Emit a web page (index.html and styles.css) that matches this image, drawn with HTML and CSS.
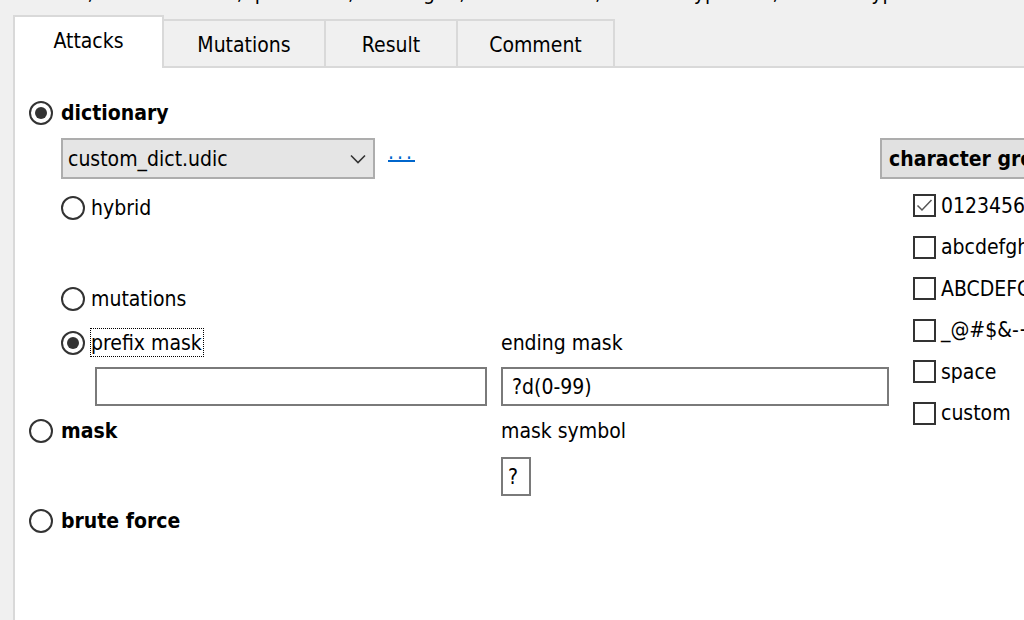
FILE: index.html
```html
<!DOCTYPE html>
<html>
<head>
<meta charset="utf-8">
<link rel="stylesheet" href="styles.css">
</head>
<body>
<div class="status"><span>total: 0,&nbsp;&nbsp;Not started: 0,&nbsp;&nbsp;paused: 0,&nbsp;&nbsp;waiting: 0,&nbsp;&nbsp;Not found: 0,&nbsp;&nbsp;Not decrypted: 0,&nbsp;&nbsp;Not encrypted: 0</span></div>
<div class="tabs">
  <div class="tab active">Attacks</div>
  <div class="tab t-mut">Mutations</div>
  <div class="tab t-res">Result</div>
  <div class="tab t-com">Comment</div>
</div>
<div class="panel">
  <div class="attacks">
    <div class="row r-dict"><span class="radio on"></span><span class="lbl bold">dictionary</span></div>
    <div class="row r-combo">
      <div class="combo"><span>custom_dict.udic</span>
        <svg class="chev" width="16" height="10" viewBox="0 0 16 10"><path d="M1 1.5 L8 8.5 L15 1.5" fill="none" stroke="#333" stroke-width="1.6"/></svg>
      </div>
      <a class="more" href="#">...</a>
    </div>
    <div class="row r-hybrid sub"><span class="radio"></span><span class="lbl">hybrid</span></div>
    <div class="row r-mut sub"><span class="radio"></span><span class="lbl">mutations</span></div>
    <div class="row2 r-prefix">
      <div class="cell sub"><span class="radio on"></span><span class="lbl focus">prefix mask</span></div>
      <div class="cell"><span class="lbl">ending mask</span></div>
    </div>
    <div class="row2 r-inputs">
      <div class="cell"><div class="input prefix"></div></div>
      <div class="cell"><div class="input ending">?d(0-99)</div></div>
    </div>
    <div class="row2 r-mask">
      <div class="cell"><span class="radio"></span><span class="lbl bold">mask</span></div>
      <div class="cell"><span class="lbl">mask symbol</span></div>
    </div>
    <div class="row2 r-sym">
      <div class="cell"></div>
      <div class="cell"><div class="input sym">?</div></div>
    </div>
    <div class="row r-brute"><span class="radio"></span><span class="lbl bold">brute force</span></div>
  </div>
  <div class="groups">
    <div class="group-head">character groups</div>
    <ul class="checks">
      <li><span class="cb"><svg width="19" height="19" viewBox="0 0 19 19"><path d="M2.5 9.5 L7 14 L16.5 4" fill="none" stroke="#555" stroke-width="1.5"/></svg></span><span class="lbl">0123456789</span></li>
      <li><span class="cb"></span><span class="lbl">abcdefghijklmnopqrstuvwxyz</span></li>
      <li><span class="cb"></span><span class="lbl">ABCDEFGHIJKLMNOPQRSTUVWXYZ</span></li>
      <li><span class="cb"></span><span class="lbl">_@#$&amp;-+=!?</span></li>
      <li><span class="cb"></span><span class="lbl">space</span></li>
      <li><span class="cb"></span><span class="lbl">custom</span></li>
    </ul>
  </div>
</div>
</body>
</html>
```
FILE: styles.css
```css
html, body {
  margin: 0;
  padding: 0;
}
body {
  width: 1024px;
  height: 620px;
  overflow: hidden;
  background: #f0f0f0;
  font-family: "DejaVu Sans Condensed", "DejaVu Sans", sans-serif;
  font-stretch: condensed;
  font-size: 21px;
  color: #000;
}
.status {
  height: 6px;
  overflow: hidden;
  padding-left: 20px;
  white-space: nowrap;
}
.status span {
  display: block;
  line-height: 24px;
  margin-top: -19px;
}
.tabs {
  display: flex;
  align-items: flex-end;
  margin-top: 9px;
  margin-left: 13px;
  height: 53px;
  position: relative;
  z-index: 1;
}
.tab {
  box-sizing: border-box;
  height: 47px;
  margin-bottom: 2px;
  background: #f0f0f0;
  border: 2px solid #d9d9d9;
  border-bottom: none;
  display: flex;
  align-items: center;
  justify-content: center;
  margin-left: -2px;
  padding-top: 2px;
}
.tab.active {
  height: 53px;
  margin-bottom: 0;
  margin-left: 0;
  background: #fff;
  width: 151px;
  padding-top: 0;
  padding-bottom: 3px;
  position: relative;
  z-index: 2;
}
.t-mut { width: 164px; }
.t-res { width: 134px; }
.t-com { width: 159px; }
.panel {
  margin-left: 13px;
  margin-top: -2px;
  border-left: 2px solid #d9d9d9;
  border-top: 2px solid #d9d9d9;
  background: #fff;
  height: 560px;
  display: flex;
}
.attacks {
  box-sizing: border-box;
  flex: none;
  width: 865px;
  padding-left: 14px;
  padding-top: 32px;
}
.row {
  display: flex;
  align-items: center;
}
.row2 {
  display: grid;
  grid-template-columns: 472px 388px;
  align-items: center;
}
.cell {
  display: flex;
  align-items: center;
}
.sub { padding-left: 32px; }
.lbl { white-space: nowrap; }
.bold { font-weight: bold; }
.radio {
  flex: none;
  box-sizing: border-box;
  width: 24px;
  height: 24px;
  border: 2px solid #333;
  border-radius: 50%;
  background: #fff;
  margin-right: 8px;
  display: flex;
  align-items: center;
  justify-content: center;
}
.sub .radio { margin-right: 6px; }
.radio.on::after {
  content: "";
  width: 12px;
  height: 12px;
  border-radius: 50%;
  background: #333;
}
.focus {
  border: 1px dotted #000;
  padding: 2px 1px 1px 0;
  margin-left: -1px;
}
.r-dict { height: 25px; }
.r-combo { height: 41px; margin-top: 13px; padding-left: 32px; }
.r-hybrid { height: 25px; margin-top: 16px; }
.r-mut { height: 24px; margin-top: 67px; }
.r-prefix { height: 26px; margin-top: 17px; }
.r-inputs { height: 39px; margin-top: 13px; }
.r-mask { height: 26px; margin-top: 12px; }
.r-sym { height: 39px; margin-top: 13px; }
.r-brute { height: 24px; margin-top: 13px; }
.combo {
  box-sizing: border-box;
  width: 314px;
  height: 41px;
  border: 2px solid #adadad;
  background: #e5e5e5;
  display: flex;
  align-items: center;
  justify-content: space-between;
  padding: 0 7px 0 5px;
}
.chev { flex: none; }
.more {
  margin-left: 13px;
  color: #0066cc;
  letter-spacing: 3px;
  font-size: 21px;
  line-height: 24px;
  text-decoration: underline;
  text-underline-offset: 1px;
  margin-top: -14px;
}
.input {
  box-sizing: border-box;
  height: 39px;
  border: 2px solid #7a7a7a;
  background: #fff;
  display: flex;
  align-items: center;
  padding-left: 9px;
  white-space: nowrap;
}
.prefix { width: 392px; margin-left: 66px; }
.ending { width: 388px; }
.sym { width: 30px; padding-left: 5px; }
.groups {
  flex: none;
  width: 300px;
}
.group-head {
  box-sizing: border-box;
  margin-top: 70px;
  height: 41px;
  width: 280px;
  border: 2px solid #adadad;
  background: #e1e1e1;
  font-weight: bold;
  display: flex;
  align-items: center;
  padding-left: 7px;
  white-space: nowrap;
}
.checks {
  list-style: none;
  margin: 6px 0 0 0;
  padding: 0 0 0 33px;
}
.checks li {
  height: 41.5px;
  display: flex;
  align-items: center;
}
.cb {
  flex: none;
  box-sizing: border-box;
  width: 23px;
  height: 23px;
  border: 2px solid #333;
  background: #fff;
  margin-right: 5px;
  display: flex;
  align-items: center;
  justify-content: center;
}
```
